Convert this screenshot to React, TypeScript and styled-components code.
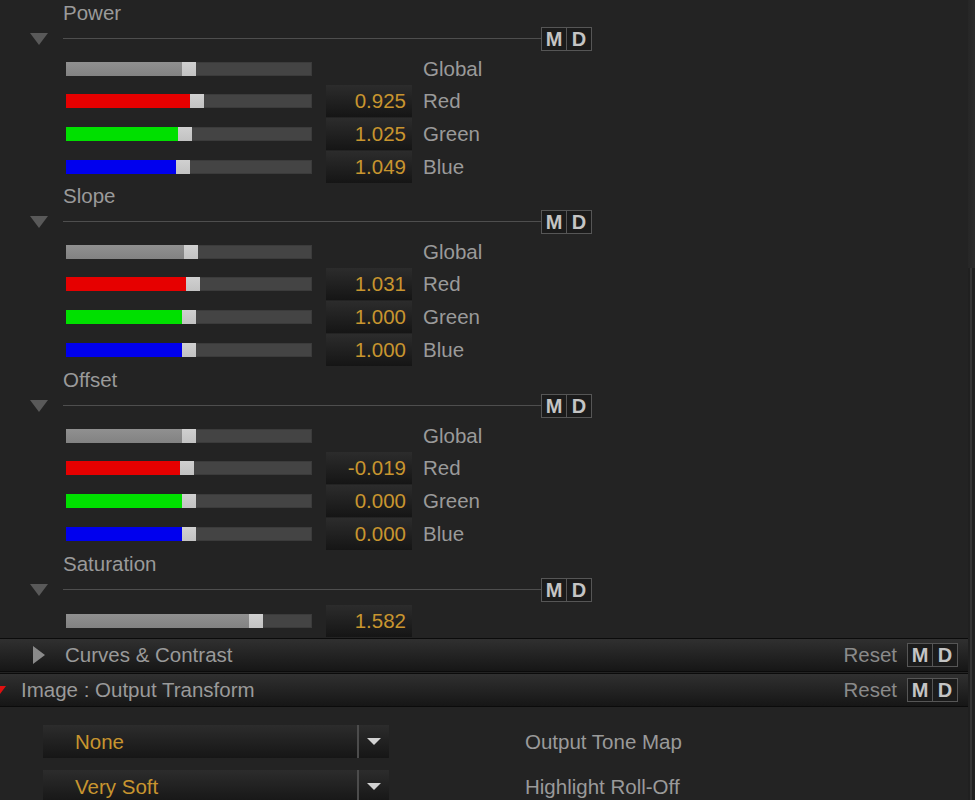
import React from "react";
import styled, { createGlobalStyle } from "styled-components";

const Global = createGlobalStyle`
  html, body {
    margin: 0;
    padding: 0;
    background: #232323;
    overflow: hidden;
  }
  body {
    font-family: "Liberation Sans", Arial, sans-serif;
  }
`;

const Screen = styled.div`
  display: flex;
  width: 975px;
  height: 800px;
  overflow: hidden;
  background: #232323;
`;

const Main = styled.div`
  flex: 1;
  display: flex;
  flex-direction: column;
  min-width: 0;
  overflow: hidden;
  & > * {
    flex-shrink: 0;
  }
`;

const ScrollBar = styled.div`
  width: 7px;
  display: flex;
  flex-direction: column;
  background: #1f1f1f;
`;

const ScrollThumb = styled.div`
  height: 268px;
  background: linear-gradient(90deg, #262626, #2c2c2c);
`;

const ScrollTrack = styled.div`
  flex: 1;
  display: flex;
  justify-content: center;
  background: #202020;
  &::after {
    content: "";
    width: 2px;
    margin-left: -1px;
    background: #343434;
  }
`;

const Section = styled.section<{ $height?: number }>`
  display: flex;
  flex-direction: column;
  height: ${(p) => (p.$height ? `${p.$height}px` : "auto")};
`;

const Title = styled.div`
  height: 26px;
  line-height: 26px;
  padding-left: 63px;
  font-size: 20.5px;
  color: #9a9a9a;
`;

const HeaderRow = styled.div`
  display: flex;
  align-items: center;
  height: 25px;
`;

const TriangleSlot = styled.div`
  width: 63px;
  display: flex;
  align-items: center;
  padding-left: 30px;
  box-sizing: border-box;
`;

const DownTriangle = styled.div<{ $color: string; $w: number; $h: number }>`
  width: 0;
  height: 0;
  border-left: ${(p) => p.$w / 2}px solid transparent;
  border-right: ${(p) => p.$w / 2}px solid transparent;
  border-top: ${(p) => p.$h}px solid ${(p) => p.$color};
`;

const RightTriangle = styled.div`
  width: 0;
  height: 0;
  border-top: 9px solid transparent;
  border-bottom: 9px solid transparent;
  border-left: 12px solid #8a8a8a;
`;

const Rule = styled.div`
  width: 478px;
  height: 1px;
  background: #4e4e4e;
`;

const MDGroup = styled.div`
  display: flex;
  gap: 1px;
  padding: 1px;
  background: #565656;
`;

const MDCell = styled.div`
  width: 24px;
  height: 22px;
  display: flex;
  align-items: center;
  justify-content: center;
  background: #1b1b1b;
  color: #c4c4c4;
  font-weight: bold;
  font-size: 20px;
  line-height: 1;
`;

const Row = styled.div<{ $offset: number; $height: number }>`
  display: flex;
  align-items: center;
  height: ${(p) => p.$height}px;
  flex-shrink: 0;
  box-sizing: border-box;
  padding-left: 66px;
  padding-top: ${(p) => p.$offset}px;
`;

const Track = styled.div`
  width: 246px;
  height: 14px;
  display: flex;
  background: #444444;
  box-shadow: inset 0 0 0 1px #3b3b3b;
  margin-right: 14px;
`;

const fills: Record<string, string> = {
  global: "linear-gradient(#909090, #828282)",
  red: "#e60000",
  green: "#00e000",
  blue: "#0000ee",
};

const Fill = styled.div<{ $channel: string }>`
  height: 100%;
  background: ${(p) => fills[p.$channel]};
`;

const Thumb = styled.div`
  width: 14px;
  height: 100%;
  background: linear-gradient(#d0d0d0, #c2c2c2);
`;

const ValueBox = styled.div<{ $empty?: boolean }>`
  width: 86px;
  height: 32px;
  flex-shrink: 0;
  box-sizing: border-box;
  display: flex;
  align-items: center;
  justify-content: flex-end;
  padding-right: 6px;
  background: ${(p) =>
    p.$empty ? "transparent" : "linear-gradient(#2c2c2c, #151515)"};
  color: #c8952f;
  font-size: 20.5px;
`;

const Label = styled.div`
  margin-left: 11px;
  font-size: 20.5px;
  color: #9a9a9a;
`;

const PanelHeader = styled.div<{ $gap?: boolean }>`
  display: flex;
  align-items: center;
  height: 32px;
  border-top: 1px solid #0b0b0b;
  border-bottom: 1px solid #0b0b0b;
  margin-top: ${(p) => (p.$gap ? "1px" : "0")};
  background: linear-gradient(#303030, #161616);
  padding-right: 10px;
`;

const PanelIcon = styled.div<{ $w: number; $shift: number }>`
  width: ${(p) => p.$w}px;
  margin-left: ${(p) => p.$shift}px;
  display: flex;
  align-items: center;
`;

const PanelTitle = styled.div`
  flex: 1;
  font-size: 20.5px;
  color: #9a9a9a;
`;

const ResetText = styled.div`
  font-size: 20.5px;
  color: #8a8a8a;
  margin-right: 10px;
`;

const PanelBody = styled.div`
  display: flex;
  flex-direction: column;
  gap: 12px;
  padding: 18px 0 0 43px;
`;

const FieldRow = styled.div`
  display: flex;
  align-items: center;
  flex-shrink: 0;
`;

const Dropdown = styled.div`
  width: 346px;
  height: 33px;
  display: flex;
  background: linear-gradient(#2c2c2c, #161616);
`;

const DropValue = styled.div`
  flex: 1;
  display: flex;
  align-items: center;
  padding-left: 32px;
  color: #c8952f;
  font-size: 20.5px;
  border-right: 2px solid #4c4c4c;
`;

const DropArrow = styled.div`
  width: 30px;
  display: flex;
  align-items: center;
  justify-content: center;
  &::after {
    content: "";
    border-left: 7px solid transparent;
    border-right: 7px solid transparent;
    border-top: 7px solid #d2d2d2;
  }
`;

const FieldLabel = styled.div`
  margin-left: 136px;
  font-size: 20.5px;
  color: #9a9a9a;
`;

type Channel = "global" | "red" | "green" | "blue";
type SliderRow = { channel: Channel; fill: number; value?: string; label?: string };
type Group = { title: string; height: number; rows: SliderRow[] };

const groups: Group[] = [
  {
    title: "Power",
    height: 183,
    rows: [
      { channel: "global", fill: 116, label: "Global" },
      { channel: "red", fill: 124, value: "0.925", label: "Red" },
      { channel: "green", fill: 112, value: "1.025", label: "Green" },
      { channel: "blue", fill: 110, value: "1.049", label: "Blue" },
    ],
  },
  {
    title: "Slope",
    height: 184,
    rows: [
      { channel: "global", fill: 118, label: "Global" },
      { channel: "red", fill: 120, value: "1.031", label: "Red" },
      { channel: "green", fill: 116, value: "1.000", label: "Green" },
      { channel: "blue", fill: 116, value: "1.000", label: "Blue" },
    ],
  },
  {
    title: "Offset",
    height: 184,
    rows: [
      { channel: "global", fill: 116, label: "Global" },
      { channel: "red", fill: 114, value: "-0.019", label: "Red" },
      { channel: "green", fill: 116, value: "0.000", label: "Green" },
      { channel: "blue", fill: 116, value: "0.000", label: "Blue" },
    ],
  },
];

const MD = () => (
  <MDGroup>
    <MDCell>M</MDCell>
    <MDCell>D</MDCell>
  </MDGroup>
);

const GroupHeader = ({ title }: { title: string }) => (
  <>
    <Title>{title}</Title>
    <HeaderRow>
      <TriangleSlot>
        <DownTriangle $color="#595959" $w={18} $h={12} />
      </TriangleSlot>
      <Rule />
      <MD />
    </HeaderRow>
  </>
);

const Slider = ({
  row,
  offset = 0,
  height = 33,
}: {
  row: SliderRow;
  offset?: number;
  height?: number;
}) => (
  <Row $offset={offset} $height={height}>
    <Track>
      <Fill $channel={row.channel} style={{ width: row.fill }} />
      <Thumb />
    </Track>
    <ValueBox $empty={!row.value}>{row.value}</ValueBox>
    {row.label && <Label>{row.label}</Label>}
  </Row>
);

export default function App() {
  return (
    <Screen>
      <Global />
      <Main>
        {groups.map((g) => (
          <Section key={g.title} $height={g.height}>
            <GroupHeader title={g.title} />
            {g.rows.map((r, i) => (
              <Slider key={r.channel} row={r} offset={i === 0 ? 2 : 0} />
            ))}
          </Section>
        ))}
        <Section>
          <GroupHeader title="Saturation" />
          <Slider
            offset={2}
            height={36}
            row={{ channel: "global", fill: 183, value: "1.582" }}
          />
        </Section>

        <PanelHeader>
          <PanelIcon $w={32} $shift={33}>
            <RightTriangle />
          </PanelIcon>
          <PanelTitle>Curves &amp; Contrast</PanelTitle>
          <ResetText>Reset</ResetText>
          <MD />
        </PanelHeader>
        <PanelHeader $gap>
          <PanelIcon $w={27} $shift={-6}>
            <DownTriangle $color="#e01010" $w={12} $h={8} />
          </PanelIcon>
          <PanelTitle>Image : Output Transform</PanelTitle>
          <ResetText>Reset</ResetText>
          <MD />
        </PanelHeader>

        <PanelBody>
          <FieldRow>
            <Dropdown>
              <DropValue>None</DropValue>
              <DropArrow />
            </Dropdown>
            <FieldLabel>Output Tone Map</FieldLabel>
          </FieldRow>
          <FieldRow>
            <Dropdown>
              <DropValue>Very Soft</DropValue>
              <DropArrow />
            </Dropdown>
            <FieldLabel>Highlight Roll-Off</FieldLabel>
          </FieldRow>
        </PanelBody>
      </Main>
      <ScrollBar>
        <ScrollThumb />
        <ScrollTrack />
      </ScrollBar>
    </Screen>
  );
}
